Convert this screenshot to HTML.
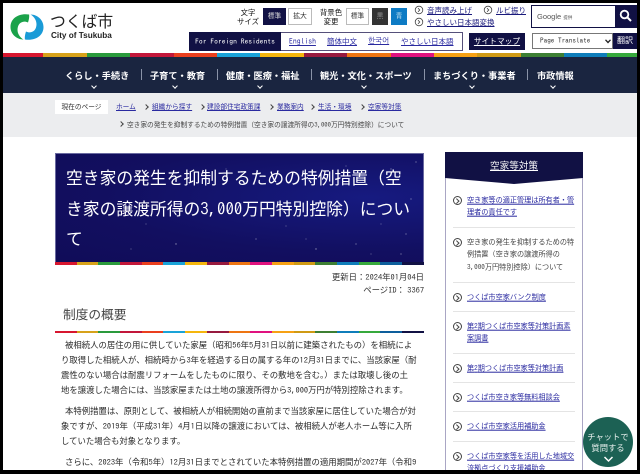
<!DOCTYPE html>
<html lang="ja"><head><meta charset="utf-8"><title>つくば市</title>
<style>
*{box-sizing:border-box;margin:0;padding:0}
html,body{width:640px;height:474px;overflow:hidden;background:#000}
body{font-family:"Liberation Sans","Noto Sans CJK JP",sans-serif;position:relative;color:#333}
#p{position:absolute;left:3px;top:3px;width:634px;height:467px;background:#fff;overflow:hidden;filter:blur(.3px)}
.a{position:absolute;white-space:nowrap}
.n{font-family:"IPAGothic","Noto Sans CJK JP",monospace}
.stripe{position:absolute;display:flex;overflow:hidden}
.stripe i{display:block;flex:none}
.btn{position:absolute;font-size:6.8px;text-align:center;line-height:15px;height:17px;top:5px;border:1px solid #bbb;color:#333}
.lnk{position:absolute;font-size:7.5px;line-height:12px;color:#1a1a7c;text-decoration:underline;white-space:nowrap;transform:translateY(1px)}
.nav{position:absolute;top:63px;color:#fff;font-size:9.2px;font-weight:bold;line-height:20px;white-space:nowrap}
.sep{position:absolute;top:66px;width:1px;height:11px;background:#8a93a8}
.chev{position:absolute;top:81px;width:4px;height:4px;border-right:1.2px solid #fff;border-bottom:1.2px solid #fff;transform:rotate(45deg)}
.bc{position:absolute;top:98px;font-size:6.7px;line-height:14px;white-space:nowrap;color:#2a2aa0;text-decoration:underline}
.gt{position:absolute;top:97px;width:5px;height:14px}
.gt:after{content:"";position:absolute;left:0;top:5px;width:3px;height:3px;border-right:1px solid #444;border-top:1px solid #444;transform:rotate(45deg)}
.li{position:absolute;left:464px;width:110px;font-size:7.15px;line-height:12.5px;color:#2a2aa0;text-decoration:underline;transform:translateY(.7px)}
.ic{position:absolute;left:449.5px;width:9px;height:9px;border:1px solid #444;border-radius:50%}
.ic:after{content:"";position:absolute;left:1px;top:2px;width:2.5px;height:2.5px;border-right:1px solid #444;border-top:1px solid #444;transform:rotate(45deg)}
.hr{position:absolute;left:450px;width:122px;height:1px;background:#e4e4e4}
.t{position:absolute;left:58px;width:366px;font-size:8.4px;line-height:15px;color:#2a2a2a;white-space:nowrap}
.in{padding-left:4px}
</style></head><body>
<div id="p">
<svg class="a" style="left:7px;top:11px" width="34" height="26" viewBox="0 0 34 26">
<path d="M19 .5C9-1 .5 4 .5 13c0 7 6 12.5 13 12.5-5-3-7-8-5.5-13 1.5-4.5 6-6 10-4 1-3 1.5-6 1-8.5z" fill="#1ba24a"/>
<path d="M19 .5C9-1 .5 4 .5 13c0 7 6 12.5 13 12.5-5-3-7-8-5.5-13 1.5-4.5 6-6 10-4 1-3 1.5-6 1-8.5z" fill="#1a9bd7" transform="rotate(180 17 13)"/>
</svg>
<div class="a" style="left:47px;top:8px;font-size:15.8px;line-height:24px;color:#222">つくば市</div>
<div class="a" style="left:48px;top:27px;font-size:8.2px;line-height:11px;color:#222;font-weight:bold">City of Tsukuba</div>

<div class="a" style="left:231px;top:5px;width:28px;font-size:7.4px;line-height:9px;text-align:center;color:#111">文字<br>サイズ</div>
<div class="btn" style="left:260px;width:23px;background:#111144;color:#ddd;border-color:#111144">標準</div>
<div class="btn" style="left:285px;width:24px">拡大</div>
<div class="a" style="left:315px;top:5px;width:26px;font-size:7.4px;line-height:9px;text-align:center;color:#111">背景色<br>変更</div>
<div class="btn" style="left:343px;width:23px">標準</div>
<div class="btn" style="left:369px;width:16px;background:#333;color:#999;border-color:#333">黒</div>
<div class="btn" style="left:388px;width:16px;background:#0d7bc4;color:#bde;border-color:#0d7bc4">青</div>
<svg class="a" style="left:411px;top:2px" width="10" height="10"><circle cx="5" cy="5" r="3.8" fill="none" stroke="#444" stroke-width=".8"/><path d="M4 3.2l1.8 1.8-1.8 1.8" fill="none" stroke="#444" stroke-width=".8"/></svg>
<div class="lnk" style="left:424px;top:1px">音声読み上げ</div>
<svg class="a" style="left:480px;top:2px" width="10" height="10"><circle cx="5" cy="5" r="3.8" fill="none" stroke="#444" stroke-width=".8"/><path d="M4 3.2l1.8 1.8-1.8 1.8" fill="none" stroke="#444" stroke-width=".8"/></svg>
<div class="lnk" style="left:493px;top:1px">ルビ振り</div>
<svg class="a" style="left:411px;top:14px" width="10" height="10"><circle cx="5" cy="5" r="3.8" fill="none" stroke="#444" stroke-width=".8"/><path d="M4 3.2l1.8 1.8-1.8 1.8" fill="none" stroke="#444" stroke-width=".8"/></svg>
<div class="lnk" style="left:424px;top:13px">やさしい日本語変換</div>

<div class="a" style="left:528px;top:2px;width:106px;height:23px;border:1px solid #111144;background:#fff"></div>
<div class="a" style="left:534px;top:8px;font-size:7.5px;line-height:11px;color:#555">Google <span style="font-size:4.5px">提供</span></div>
<div class="a" style="left:612px;top:2px;width:22px;height:23px;background:#111144"></div>
<svg class="a" style="left:616px;top:6px" width="13" height="13"><circle cx="5.5" cy="5.5" r="3.8" fill="none" stroke="#fff" stroke-width="1.8"/><path d="M8.5 8.5l3.5 3.5" stroke="#fff" stroke-width="2"/></svg>

<div class="a" style="left:186px;top:29px;width:274px;height:19px;border:1px solid #55507a;background:#fff"></div>
<div class="a n" style="left:186px;top:29px;width:92px;height:19px;background:#111144;color:#fff;font-size:7.6px;line-height:19px;text-align:center">For Foreign Residents</div>
<div class="a n" style="left:286px;top:32px;font-size:7.7px;line-height:13px;color:#2a2aa0;text-decoration:underline">English</div>
<div class="a" style="left:324px;top:32px;font-size:7.5px;line-height:13px;color:#2a2aa0;text-decoration:underline">簡体中文</div>
<div class="a" style="left:365px;top:32px;font-size:7.5px;line-height:13px;color:#2a2aa0;text-decoration:underline;font-family:'NanumGothic',sans-serif">한국어</div>
<div class="a" style="left:398px;top:32px;font-size:7.5px;line-height:13px;color:#2a2aa0;text-decoration:underline">やさしい日本語</div>
<div class="a" style="left:466px;top:30px;width:56px;height:17px;background:#111144;color:#fff;font-size:7.7px;line-height:17px;text-align:center;text-decoration:underline">サイトマップ</div>
<div class="a" style="left:529px;top:30px;width:81px;height:16px;border:1px solid #777;background:#fff"></div>
<div class="a n" style="left:537px;top:30px;font-size:7.2px;line-height:16px;color:#333">Page Translate</div>
<svg class="a" style="left:602px;top:36px" width="6" height="5"><path d="M.5 .8L3 3.5 5.5 .8" fill="none" stroke="#222" stroke-width="1.3"/></svg>
<div class="a" style="left:610px;top:30px;width:24px;height:16px;background:#111144;color:#fff;font-size:8px;line-height:16px;text-align:center">翻訳</div>

<div class="stripe" style="left:0;top:50px;width:634px;height:4px">
<i style="width:40.4px;background:#d7162f"></i><i style="width:43.4px;background:#d7a21a"></i><i style="width:43.4px;background:#2a9a3c"></i><i style="width:43.4px;background:#c2173a"></i><i style="width:43.4px;background:#ea3f1e"></i><i style="width:43.4px;background:#1aa3d8"></i><i style="width:43.4px;background:#f5b60d"></i><i style="width:43.4px;background:#971a3f"></i><i style="width:43.4px;background:#ee7512"></i><i style="width:43.4px;background:#e0127f"></i><i style="width:43.4px;background:#f6a114"></i><i style="width:43.4px;background:#cf9a14"></i><i style="width:43.4px;background:#3d7f33"></i><i style="width:43.4px;background:#0f7dba"></i><i style="width:43.4px;background:#36a93c"></i>
</div>
<div class="a" style="left:0;top:54px;width:634px;height:36px;background:#1a2540"></div>
<div class="nav" style="left:62px">くらし・手続き</div><div class="sep" style="left:138px"></div><div class="chev" style="left:89px"></div>
<div class="nav" style="left:147px">子育て・教育</div><div class="sep" style="left:214px"></div><div class="chev" style="left:170px"></div>
<div class="nav" style="left:223px">健康・医療・福祉</div><div class="sep" style="left:308px"></div><div class="chev" style="left:255px"></div>
<div class="nav" style="left:317px">観光・文化・スポーツ</div><div class="sep" style="left:421px"></div><div class="chev" style="left:359px"></div>
<div class="nav" style="left:430px">まちづくり・事業者</div><div class="sep" style="left:524px"></div><div class="chev" style="left:467px"></div>
<div class="nav" style="left:534px">市政情報</div><div class="chev" style="left:548px"></div>

<div class="a" style="left:0;top:90px;width:634px;height:44px;background:#ecedef"></div>
<div class="a" style="left:52px;top:97px;width:53px;height:14px;background:#fff;font-size:6.7px;line-height:15px;text-align:center;color:#333">現在のページ</div>
<div class="bc" style="left:113px">ホーム</div><div class="gt" style="left:141px"></div>
<div class="bc" style="left:149px">組織から探す</div><div class="gt" style="left:197px"></div>
<div class="bc" style="left:204px">建設部住宅政策課</div><div class="gt" style="left:266px"></div>
<div class="bc" style="left:274px">業務案内</div><div class="gt" style="left:307px"></div>
<div class="bc" style="left:315px">生活・環境</div><div class="gt" style="left:357px"></div>
<div class="bc" style="left:365px">空家等対策</div>
<div class="gt" style="left:116px;top:114px"></div>
<div class="a" style="left:124px;top:115px;font-size:6.7px;line-height:14px;color:#444">空き家の発生を抑制するための特例措置（空き家の譲渡所得の<span class="n">3,000</span>万円特別控除）について</div>

<div class="a" style="left:52px;top:150px;width:369px;height:109px;background:radial-gradient(ellipse at 85% 40%,#161a80 0%,#120f60 60%,#100c58 100%);border:1px solid #6a6aa0;border-bottom:0"></div>
<svg class="a" style="left:53px;top:151px" width="367" height="108"><g fill="#fff" opacity=".5"><circle cx="240" cy="20" r=".6"/><circle cx="280" cy="60" r=".6"/><circle cx="310" cy="30" r=".7"/><circle cx="350" cy="80" r=".6"/><circle cx="200" cy="85" r=".6"/><circle cx="120" cy="90" r=".7"/><circle cx="90" cy="70" r=".5"/><circle cx="335" cy="15" r=".6"/><circle cx="170" cy="15" r=".5"/><circle cx="260" cy="95" r=".7"/><circle cx="355" cy="45" r=".6"/><circle cx="150" cy="60" r=".5"/><circle cx="300" cy="90" r=".6"/><circle cx="325" cy="70" r=".5"/><circle cx="345" cy="100" r=".6"/><circle cx="230" cy="72" r=".5"/><circle cx="185" cy="50" r=".5"/><circle cx="75" cy="95" r=".5"/><circle cx="290" cy="12" r=".5"/><circle cx="360" cy="8" r=".6"/><circle cx="315" cy="100" r=".5"/><circle cx="250" cy="85" r=".5"/></g></svg>
<div class="a" style="left:63px;top:161px;width:345px;font-size:16.8px;line-height:30.5px;color:#fff;white-space:normal;word-break:break-all">空き家の発生を抑制するための特例措置（空き家の譲渡所得の<span class="n">3,000</span>万円特別控除）について</div>
<div class="stripe" style="left:52px;top:259px;width:369px;height:3px">
<i style="width:21.7px;background:#d7162f"></i><i style="width:21.7px;background:#d7a21a"></i><i style="width:21.7px;background:#2a9a3c"></i><i style="width:21.7px;background:#c2173a"></i><i style="width:21.7px;background:#ea3f1e"></i><i style="width:21.7px;background:#1aa3d8"></i><i style="width:21.7px;background:#f5b60d"></i><i style="width:21.7px;background:#971a3f"></i><i style="width:21.7px;background:#ee7512"></i><i style="width:21.7px;background:#e0127f"></i><i style="width:21.7px;background:#f6a114"></i><i style="width:21.7px;background:#cf9a14"></i><i style="width:21.7px;background:#3d7f33"></i><i style="width:21.7px;background:#0f7dba"></i><i style="width:21.7px;background:#36a93c"></i><i style="width:21.7px;background:#0d5e9c"></i><i style="width:21.7px;background:#111144"></i>
</div>
<div class="a" style="left:300px;top:268px;width:121px;text-align:right;font-size:8.4px;line-height:12px;color:#333">更新日：<span class="n">2024</span>年<span class="n">01</span>月<span class="n">04</span>日<br>ページ<span class="n">ID</span>： <span class="n">3367</span></div>
<div class="a" style="left:60px;top:303px;font-size:12.7px;line-height:18px;color:#444">制度の概要</div>
<div class="stripe" style="left:52px;top:328px;width:369px;height:2px">
<i style="width:21.7px;background:#d7162f"></i><i style="width:21.7px;background:#d7a21a"></i><i style="width:21.7px;background:#2a9a3c"></i><i style="width:21.7px;background:#c2173a"></i><i style="width:21.7px;background:#ea3f1e"></i><i style="width:21.7px;background:#1aa3d8"></i><i style="width:21.7px;background:#f5b60d"></i><i style="width:21.7px;background:#971a3f"></i><i style="width:21.7px;background:#ee7512"></i><i style="width:21.7px;background:#e0127f"></i><i style="width:21.7px;background:#f6a114"></i><i style="width:21.7px;background:#cf9a14"></i><i style="width:21.7px;background:#3d7f33"></i><i style="width:21.7px;background:#0f7dba"></i><i style="width:21.7px;background:#36a93c"></i><i style="width:21.7px;background:#0d5e9c"></i><i style="width:21.7px;background:#111144"></i>
</div>
<div class="t in" style="top:335px">被相続人の居住の用に供していた家屋（昭和<span class="n">56</span>年<span class="n">5</span>月<span class="n">31</span>日以前に建築されたもの）を相続によ</div>
<div class="t" style="top:350px">り取得した相続人が、相続時から<span class="n">3</span>年を経過する日の属する年の<span class="n">12</span>月<span class="n">31</span>日までに、当該家屋（耐</div>
<div class="t" style="top:365px">震性のない場合は耐震リフォームをしたものに限り、その敷地を含む。）または取壊し後の土</div>
<div class="t" style="top:380px">地を譲渡した場合には、当該家屋または土地の譲渡所得から<span class="n">3,000</span>万円が特別控除されます。</div>
<div class="t in" style="top:401px">本特例措置は、原則として、被相続人が相続開始の直前まで当該家屋に居住していた場合が対</div>
<div class="t" style="top:416px">象ですが、<span class="n">2019</span>年（平成<span class="n">31</span>年）<span class="n">4</span>月<span class="n">1</span>日以降の譲渡においては、被相続人が老人ホーム等に入所</div>
<div class="t" style="top:431px">していた場合も対象となります。</div>
<div class="t in" style="top:452px">さらに、<span class="n">2023</span>年（令和<span class="n">5</span>年）<span class="n">12</span>月<span class="n">31</span>日までとされていた本特例措置の適用期間が<span class="n">2027</span>年（令和<span class="n">9</span></div>

<div class="a" style="left:442px;top:149px;width:138px;height:330px;border-left:1.5px solid #a9a6c4;border-right:1.5px solid #a9a6c4;background:#fff"></div>
<svg class="a" style="left:442px;top:149px" width="138" height="32"><path d="M0 0H138V26L69 32 0 26Z" fill="#111144"/></svg>
<div class="a" style="left:442px;top:157px;width:138px;text-align:center;color:#fff;font-size:9.6px;line-height:14px;text-decoration:underline">空家等対策</div>

<div class="ic" style="top:192.5px"></div><div class="li" style="top:190.75px">空き家等の適正管理は所有者・管理者の責任です</div>
<div class="hr" style="top:224px"></div>
<div class="ic" style="top:234.5px"></div><div class="li" style="top:232.75px;color:#444;text-decoration:none">空き家の発生を抑制するための特例措置（空き家の譲渡所得の<span class="n">3,000</span>万円特別控除）について</div>
<div class="hr" style="top:279px"></div>
<div class="ic" style="top:289.5px"></div><div class="li" style="top:287.75px">つくば市空家バンク制度</div>
<div class="hr" style="top:308px"></div>
<div class="ic" style="top:318.5px"></div><div class="li" style="top:316.75px">第<span class="n">2</span>期つくば市空家等対策計画素案調書</div>
<div class="hr" style="top:350px"></div>
<div class="ic" style="top:360.5px"></div><div class="li" style="top:358.75px">第<span class="n">2</span>期つくば市空家等対策計画</div>
<div class="hr" style="top:379px"></div>
<div class="ic" style="top:389.5px"></div><div class="li" style="top:387.75px">つくば市空き家等無料相談会</div>
<div class="hr" style="top:408px"></div>
<div class="ic" style="top:418.5px"></div><div class="li" style="top:416.75px">つくば市空家活用補助金</div>
<div class="hr" style="top:438px"></div>
<div class="ic" style="top:448.5px"></div><div class="li" style="top:446.75px">つくば市空家等を活用した地域交流拠点づくり支援補助金</div>

<div class="a" style="left:580px;top:414px;width:50px;height:50px;border-radius:50%;background:#1c6154"></div>
<div class="a" style="left:580px;top:429px;width:50px;text-align:center;color:#e8f0ee;font-size:8.3px;line-height:10.5px">チャットで<br>質問する</div>
<svg class="a" style="left:600px;top:453px" width="11" height="7"><path d="M1.5 1l4 4 4-4" fill="none" stroke="#fff" stroke-width="1.5"/></svg>
</div>
</body></html>
